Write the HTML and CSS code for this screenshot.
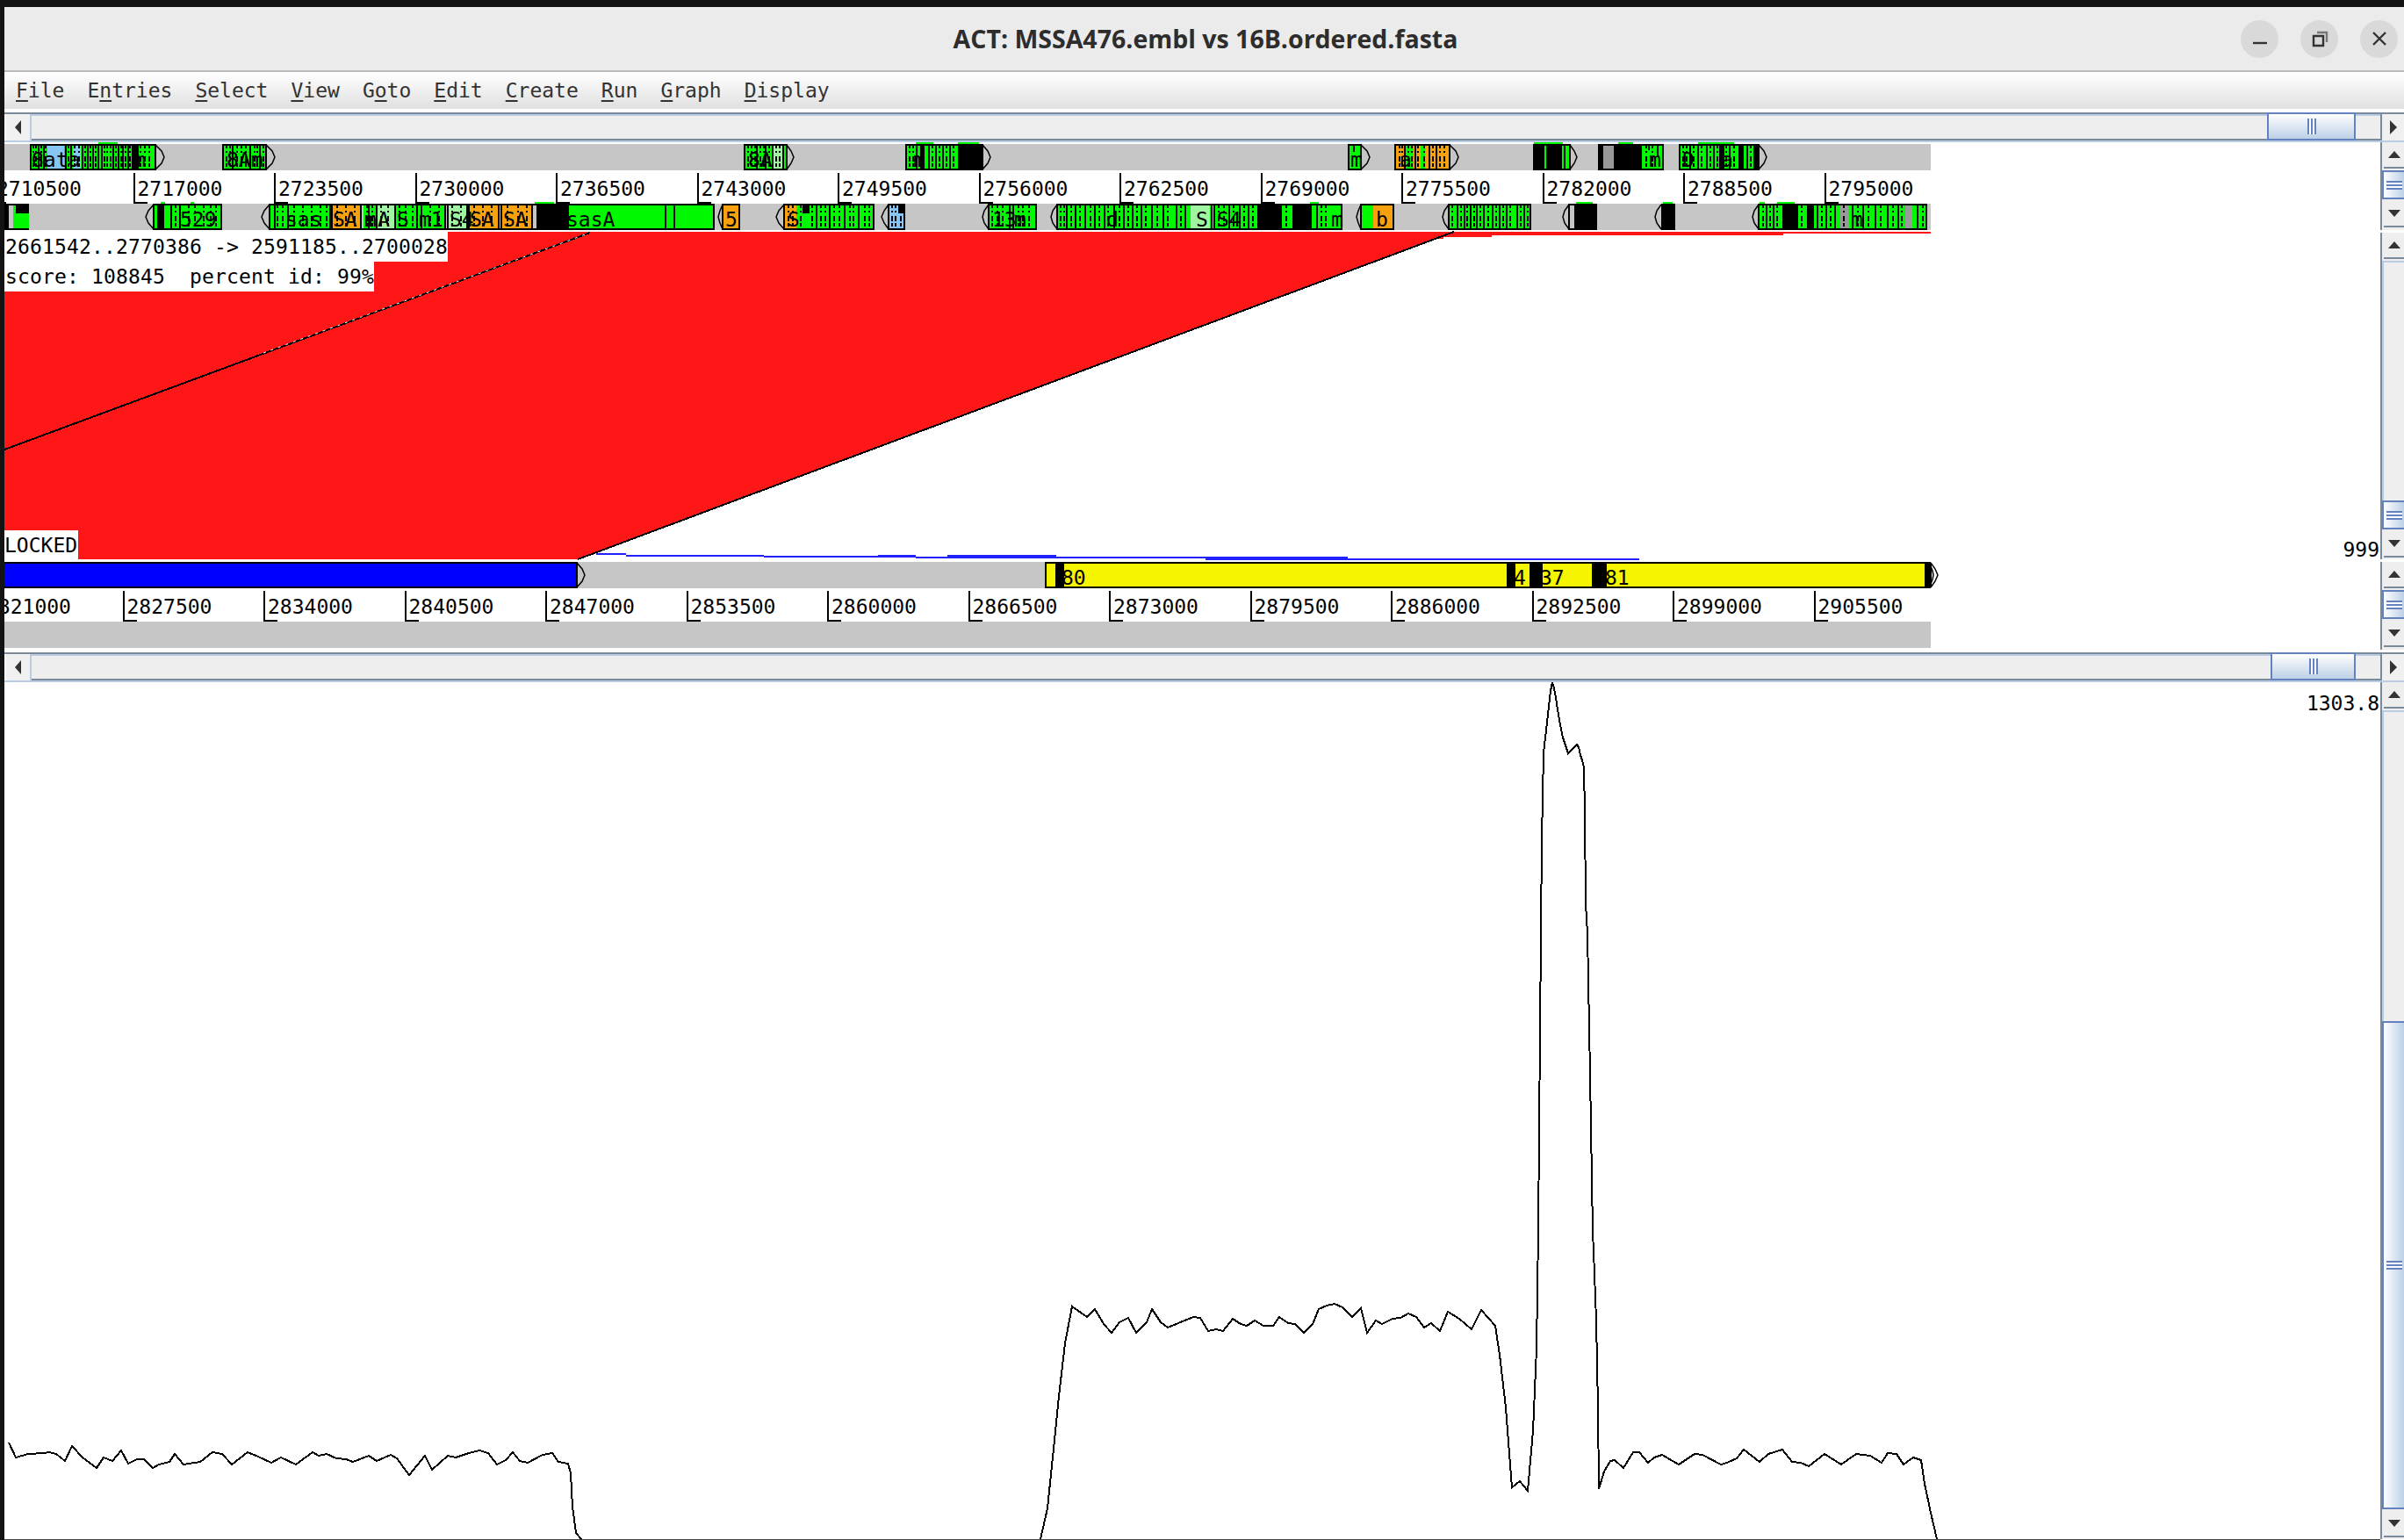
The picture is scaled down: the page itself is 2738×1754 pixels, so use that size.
FILE: index.html
```html
<!DOCTYPE html>
<html lang="en">
<head>
  <meta charset="UTF-8" />
  <title>ACT: MSSA476.embl vs 16B.ordered.fasta</title>
  <link rel="stylesheet" href="styles.css">
</head>
<body>
  <div class="window">
    <header class="titlebar">
      <span></span>
      <h1>ACT: MSSA476.embl vs 16B.ordered.fasta</h1>
      <div class="win-buttons">
        <button class="win-btn"><svg width="20" height="20" viewBox="0 0 20 20"><path class="win-icon" d="M2 15h16"/></svg></button>
        <button class="win-btn"><svg width="20" height="20" viewBox="0 0 20 20"><path class="win-icon" d="M3 7h11v11H3z"/><path class="win-icon faint" d="M7 3h11v11"/></svg></button>
        <button class="win-btn"><svg width="20" height="20" viewBox="0 0 20 20"><path class="win-icon" d="M3 3l14 14M17 3L3 17"/></svg></button>
      </div>
    </header>

    <nav class="menubar">
      <span><u>F</u>ile</span>
      <span>E<u>n</u>tries</span>
      <span><u>S</u>elect</span>
      <span><u>V</u>iew</span>
      <span>G<u>o</u>to</span>
      <span><u>E</u>dit</span>
      <span><u>C</u>reate</span>
      <span><u>R</u>un</span>
      <span><u>G</u>raph</span>
      <span><u>D</u>isplay</span>
    </nav>

    <div class="hscroll">
      <div class="arrow-btn left"><i class="tri-left"></i></div>
      <div class="hscroll-track"><div class="hthumb"><b></b></div></div>
      <div class="arrow-btn right"><i class="tri-right"></i></div>
    </div>

    <div class="viewer">
      <div class="viewer-main">
        <svg class="track" width="2194" height="32" viewBox="5 162 2194 32">
          <rect x="5" y="164" width="2194" height="30" class="gray"/>
          <path class="green" d="M112 162h22v2h-22zM1043 162h20v2h-20zM1091 162h24v2h-24zM1747 162h33v2h-33zM1843 162h17v2h-17zM1934 162h41v2h-41z"/>
          <path class="green" d="M35 165h142v28H35zM254 165h49v28h-49zM848 165h48v28h-48zM1032 165h87v28h-87zM1536 165h14v28h-14zM1747 165h41v28h-41zM1870 165h24v28h-24zM1913 165h90v28h-90z"/>
          <path class="blue" d="M54 166h19v26H54zM83 166h9v26h-9z"/>
          <path class="pale" d="M880 166h12v26h-12z"/>
          <path class="orange" d="M1589 165h62v28h-62z"/>
          <path class="green" d="M1601 166h9v26h-9zM1618 166h5v26h-5z"/>
          <path class="mid" d="M1826 166h12v26h-12z"/>
          <path class="black" d="M1091 165h28v28h-28zM1048 165h5v28h-5zM1747 165h12v28h-12zM1761 165h18v28h-18zM1821 165h5v28h-5zM1838 165h32v28h-32zM1958 165h6v28h-6zM1980 165h6v28h-6zM150 165h8v28h-8zM1997 165h6v28h-6z"/>
          <path class="ink" d="M35 164v30M177 164v30M254 164v30M303 164v30M848 164v30M896 164v30M1032 164v30M1119 164v30M1536 164v30M1550 164v30M1589 164v30M1651 164v30M1747 164v30M1788 164v30M1821 164v30M1894 164v30M1913 164v30M2003 164v30
            M44 165v28M50 165v28M75 165v28M81 165v28M94 165v28M100 165v28M106 165v28M112 165v28M116 165v28M129 165v28M135 165v28M140 165v28M146 165v28M265 165v28M285 165v28M296 165v28M862 165v28M872 165v28M880 165v28M892 165v28
            M1044 165v28M1058 165v28M1066 165v28M1074 165v28M1082 165v28M1542 165v8M1600 165v28M1612 165v28M1628 165v28M1636 165v28M1782 165v28M1888 165v12M1878 165v6M1925 165v28M1934 165v28M1944 165v28M1952 165v28M1970 165v28M1990 165v28"/>
          <path class="noise" d="M38 165v28M41 165v28M47 165v28M52 165v28M78 165v28M85 165v28M90 165v28M97 165v28M103 165v28M109 165v28M119 165v28M122 165v28M126 165v28M132 165v28M138 165v28M143 165v28M148 165v28M160 165v28M165 165v28M170 165v28
            M258 165v28M262 165v28M270 165v28M275 165v28M280 165v28M290 165v28M293 165v28M300 165v28M852 165v28M856 165v28M860 165v28M866 165v28M870 165v28M876 165v28M884 165v28M888 165v28
            M1036 165v28M1040 165v28M1050 165v28M1062 165v28M1070 165v28M1078 165v28M1086 165v28M1594 165v28M1597 165v28M1604 165v28M1608 165v28M1615 165v28M1622 165v28M1632 165v28M1640 165v28M1645 165v28
            M1917 165v28M1921 165v28M1929 165v28M1938 165v28M1948 165v28M1956 165v28M1966 165v28M1975 165v28M1985 165v28M1994 165v28M1875 165v28M1882 165v28"/>
          <path class="ink" d="M35 165h142M35 193h142M254 165h49M254 193h49M848 165h48M848 193h48M1032 165h87M1032 193h87M1536 165h14M1536 193h14M1589 165h62M1589 193h62M1747 165h41M1747 193h41M1821 165h73M1821 193h73M1913 165h90M1913 193h90"/>
          <path class="chev" d="M177 165l7 7 3 7-3 7-7 7M303 165l7 7 3 7-3 7-7 7M896 165l5 7 3 7-3 7-5 7M1119 165l6 7 3 7-3 7-6 7M1550 165l7 7 3 7-3 7-7 7M1651 165l7 7 3 7-3 7-7 7M1788 165l5 7 3 7-3 7-5 7M2003 165l6 7 3 7-3 7-6 7"/>
          <text x="36" y="190">8a</text><text x="64" y="190">ta</text><text x="152" y="190">m</text>
          <text x="258" y="190">8Am</text><text x="852" y="190">8A</text><text x="1040" y="190">m</text><text x="1538" y="190">m</text><text x="1878" y="190">m</text><text x="1594" y="190">a</text><text x="1916" y="190">D</text><text x="1960" y="190">a</text>
        </svg>

        <div class="ruler">
          <div class="tick first-top"><span>2710500</span></div>
          <div class="tick"><span>2717000</span></div>
          <div class="tick"><span>2723500</span></div>
          <div class="tick"><span>2730000</span></div>
          <div class="tick"><span>2736500</span></div>
          <div class="tick"><span>2743000</span></div>
          <div class="tick"><span>2749500</span></div>
          <div class="tick"><span>2756000</span></div>
          <div class="tick"><span>2762500</span></div>
          <div class="tick"><span>2769000</span></div>
          <div class="tick"><span>2775500</span></div>
          <div class="tick"><span>2782000</span></div>
          <div class="tick"><span>2788500</span></div>
          <div class="tick"><span>2795000</span></div>
        </div>

        <svg class="track" width="2194" height="30" viewBox="5 232 2194 30">
          <rect x="5" y="232" width="2194" height="30" class="gray"/>
          <path class="green" d="M183 230h5v2h-5zM217 230h4v2h-4zM609 230h22v2h-22zM1492 230h10v2h-10zM1795 230h19v2h-19zM1894 230h11v2h-11zM2004 230h6v2h-6zM2024 230h20v2h-20z"/>
          <path class="green" d="M15 233h18v28H15zM175 233h77v28h-77zM307 233h69v28h-69zM414 233h15v28h-15zM450 233h25v28h-25zM475 233h32v28h-32zM647 233h166v28H647zM893 233h102v28H893zM1126 233h54v28h-54zM1204 233h176v28h-176zM1383 233h145v28h-145zM1550 233h14v28h-14zM1650 233h93v28h-93zM2003 233h191v28H2003z"/>
          <path class="orange" d="M378 233h33v28h-33zM534 233h34v28h-34zM571 233h35v28h-35zM823 233h19v28h-19zM893 233h14v28h-14zM1564 233h23v28h-23z"/>
          <path class="pale" d="M429 233h21v28h-21zM510 233h22v28h-22zM1356 233h22v28h-22z"/>
          <path class="blue" d="M1012 233h18v28h-18z"/>
          <path class="mid" d="M2096 233h10v28h-10zM2170 233h8v28h-8z"/>
          <path class="black" d="M5 233h5v28H5zM18 233h15v10H18zM179 233h8v28h-8zM612 233h35v28h-35zM1432 233h28v28h-28zM1472 233h22v28h-22zM1793 233h26v28h-26zM1892 233h16v28h-16zM2030 233h18v28h-18zM2058 233h8v28h-8zM1023 233h7v10h-7zM914 233h8v10h-8z"/>
          <path class="ink" d="M175 232v30M252 232v30M307 232v30M376 232v30M378 232v30M411 232v30M429 232v30M450 232v30M475 232v30M507 232v30M510 232v30M532 232v30M534 232v30M568 232v30M571 232v30M606 232v30M647 232v30M813 232v30M823 232v30M842 232v30M893 232v30M995 232v30M1012 232v30M1030 232v30M1126 232v30M1180 232v30M1204 232v30M1380 232v30M1383 232v30M1528 232v30M1550 232v30M1587 232v30M1650 232v30M1743 232v30M1787 232v30M2003 232v30M2194 232v30
            M195 233v28M205 233v28M313 233v28M328 233v28M420 233v28M480 233v28M612 233v28M620 233v28M758 233v28M768 233v28M930 233v28M945 233v28M962 233v28M978 233v28M1150 233v28M1154 233v28M1215 233v28M1225 233v28M1236 233v28M1247 233v28M1258 233v28M1269 233v28M1280 233v28M1290 233v28M1300 233v28M1312 233v28M1325 233v28M1340 233v28M1350 233v28M1400 233v28M1412 233v28M1422 233v28M1500 233v28M1660 233v28M1668 233v28M1675 233v28M1682 233v28M1690 233v28M1700 233v28M1708 233v28M1716 233v28M1728 233v28M1736 233v28M2012 233v28M2020 233v28M2070 233v28M2080 233v28M2090 233v28M2110 233v28M2122 233v28M2136 233v28M2150 233v28M2162 233v28M2184 233v28"/>
          <path class="noise" d="M200 233v28M215 233v28M222 233v28M232 233v28M240 233v28M246 233v28M316 233v28M322 233v28M335 233v28M345 233v28M355 233v28M365 233v28M372 233v28M384 233v28M394 233v28M404 233v28M418 233v28M424 233v28M434 233v28M442 233v28M455 233v28M462 233v28M470 233v28M480 233v28M490 233v28M500 233v28M515 233v28M525 233v28M540 233v28M550 233v28M560 233v28M578 233v28M590 233v28M600 233v28
            M898 233v28M903 233v28M912 233v28M925 233v28M935 233v28M940 233v28M950 233v28M956 233v28M968 233v28M972 233v28M985 233v28M990 233v28M1016 233v28M1020 233v28M1026 233v28M1130 233v28M1136 233v28M1142 233v28M1160 233v28M1165 233v28M1172 233v28
            M1208 233v28M1212 233v28M1220 233v28M1230 233v28M1242 233v28M1252 233v28M1262 233v28M1275 233v28M1285 233v28M1295 233v28M1305 233v28M1318 233v28M1330 233v28M1345 233v28M1388 233v28M1394 233v28M1405 233v28M1417 233v28M1427 233v28M1465 233v28M1505 233v28M1510 233v28
            M1654 233v28M1664 233v28M1671 233v28M1679 233v28M1686 233v28M1695 233v28M1704 233v28M1712 233v28M1720 233v28M1732 233v28M1740 233v28M2008 233v28M2016 233v28M2024 233v28M2052 233v28M2075 233v28M2085 233v28M2100 233v28M2116 233v28M2128 233v28M2142 233v28M2156 233v28M2166 233v28M2190 233v28"/>
          <path class="ink" d="M5 233h28M5 261h28M175 233h77M175 261h77M307 233h506M307 261h506M823 233h19M823 261h19M893 233h102M893 261h102M1012 233h18M1012 261h18M1126 233h54M1126 261h54M1204 233h324M1204 261h324M1550 233h37M1550 261h37M1650 233h93M1650 261h93M1787 233h32M1787 261h32M1892 233h16M1892 261h16M2003 233h191M2003 261h191"/>
          <path class="chev" d="M175 233l-6 7-3 7 3 7 6 7M307 233l-6 7-3 7 3 7 6 7M823 233l-3 7-2 7 2 7 3 7M893 233l-6 7-3 7 3 7 6 7M1012 233l-5 7-3 7 3 7 5 7M1126 233l-5 7-2 7 2 7 5 7M1204 233l-5 7-2 7 2 7 5 7M1550 233l-3 7-2 7 2 7 3 7M1650 233l-5 7-2 7 2 7 5 7M1787 233l-5 7-2 7 2 7 5 7M1892 233l-5 7-2 7 2 7 5 7M2003 233l-5 7-2 7 2 7 5 7"/>
          <text x="205" y="258">529</text><text x="325" y="258">sas</text><text x="379" y="258">SA</text><text x="415" y="258">m</text><text x="430" y="258">A</text><text x="452" y="258">S</text><text x="477" y="258">m1</text><text x="512" y="258">S4</text><text x="535" y="258">SA</text><text x="573" y="258">SA</text><text x="645" y="258">sasA</text><text x="826" y="258">5</text><text x="897" y="258">S</text><text x="1130" y="258">13</text><text x="1155" y="258">m</text><text x="1260" y="258">d</text><text x="1362" y="258">S</text><text x="1386" y="258">S4</text><text x="1516" y="258">m</text><text x="1567" y="258">b</text><text x="2108" y="258">m</text>
        </svg>

        <div class="compare">
          <svg class="compare-art" width="2706" height="378" viewBox="5 262 2706 378">
            <polygon class="red" points="5,264 1656,264 658,637 5,637"/>
            <path class="red" d="M1650 264h549v2h-168v2h-332v2h-55v2h-10z"/>
            <path class="edge" d="M1656 264L658 637"/>
            <path class="edge" d="M5 512L672 265"/>
            <path class="edge-speck" d="M300 402L672 265"/>
            <path class="blue-hit" d="M679 631h34M713 633h157M870 634h173M1000 633h43M1079 633h124M1043 635h330M1373 635h162M1373 637h494"/>
          </svg>
          <div class="hit-label">
            <div class="hit-line">2661542..2770386 -&gt; 2591185..2700028</div>
            <div class="hit-line">score: 108845  percent id: 99%</div>
          </div>
          <div class="locked">LOCKED</div>
          <div class="scale-label">999</div>
        </div>

        <svg class="track" width="2194" height="30" viewBox="5 640 2194 30">
          <rect x="5" y="640" width="2194" height="30" class="gray"/>
          <path class="blue-full" d="M5 641h652v28H5z"/>
          <path class="yellow" d="M1191 641h1008v28H1191z"/>
          <path class="black" d="M1202 641h10v28h-10zM1716 641h10v28h-10zM1742 641h15v28h-15zM1813 641h17v28h-17zM2192 641h8v28h-8z"/>
          <path class="ink" d="M5 641h652M5 669h652M657 640v30M1191 641h1008M1191 669h1008M1191 640v30"/>
          <path class="chev" d="M657 641l6 7 3 7-3 7-6 7M2199 641l5 7 3 7-3 7-5 7M2199 645l2 5 1 5-1 5-2 5"/>
          <text x="1209" y="666">80</text><text x="1724" y="666">4</text><text x="1754" y="666">37</text><text x="1828" y="666">81</text>
        </svg>

        <div class="ruler">
          <div class="tick first-bottom"><span>2821000</span></div>
          <div class="tick"><span>2827500</span></div>
          <div class="tick"><span>2834000</span></div>
          <div class="tick"><span>2840500</span></div>
          <div class="tick"><span>2847000</span></div>
          <div class="tick"><span>2853500</span></div>
          <div class="tick"><span>2860000</span></div>
          <div class="tick"><span>2866500</span></div>
          <div class="tick"><span>2873000</span></div>
          <div class="tick"><span>2879500</span></div>
          <div class="tick"><span>2886000</span></div>
          <div class="tick"><span>2892500</span></div>
          <div class="tick"><span>2899000</span></div>
          <div class="tick"><span>2905500</span></div>
        </div>

        <div class="track-empty"></div>
      </div>

      <div class="vcolumn">
        <div class="vscroll small">
          <div class="v-btn"><i class="tri-up"></i></div>
          <div class="vthumb"><b></b></div>
          <div class="v-btn"><i class="tri-down"></i></div>
        </div>
        <div class="vscroll grow">
          <div class="v-btn"><i class="tri-up"></i></div>
          <div class="v-track"></div>
          <div class="vthumb"><b></b></div>
          <div class="v-btn"><i class="tri-down"></i></div>
        </div>
        <div class="vscroll small">
          <div class="v-btn"><i class="tri-up"></i></div>
          <div class="vthumb"><b></b></div>
          <div class="v-btn"><i class="tri-down"></i></div>
        </div>
      </div>
    </div>

    <div class="hscroll second">
      <div class="arrow-btn left"><i class="tri-left"></i></div>
      <div class="hscroll-track"><div class="hthumb wide"><b></b></div></div>
      <div class="arrow-btn right"><i class="tri-right"></i></div>
    </div>

    <div class="graph-row">
      <div class="graph">
        <svg class="graph-art" width="2706" height="976" viewBox="5 774 2706 976">
          <polyline class="plot" points="10,1640 18,1657 32,1653 50,1652 56,1651 64,1653 74,1661 82,1644 94,1657 110,1669 118,1657 128,1661 138,1649 146,1664 156,1659 164,1659 174,1669 181,1665 193,1662 199,1653 209,1665 228,1662 242,1651 253,1653 264,1665 282,1651 294,1656 309,1663 320,1657 337,1665 356,1651 363,1655 372,1653 383,1658 394,1659 402,1662 420,1655 429,1661 445,1654 452,1658 466,1677 484,1655 492,1671 510,1655 519,1657 534,1652 546,1649 556,1652 566,1665 576,1660 584,1651 592,1661 601,1663 618,1654 629,1652 636,1662 647,1664 650,1675 652,1713 656,1743 662,1750"/>
          <polyline class="plot" points="1185,1750 1193,1715 1200,1647 1206,1587 1213,1527 1221,1485 1238,1497 1247,1488 1257,1505 1266,1515 1275,1503 1285,1498 1294,1515 1306,1503 1312,1488 1322,1503 1330,1509 1359,1497 1367,1498 1376,1513 1385,1511 1393,1513 1404,1499 1413,1505 1420,1507 1429,1501 1439,1507 1450,1507 1457,1497 1467,1504 1475,1505 1485,1515 1495,1505 1502,1488 1511,1484 1520,1482 1529,1486 1540,1497 1550,1487 1557,1515 1567,1501 1574,1505 1586,1499 1595,1498 1604,1493 1613,1497 1622,1509 1630,1504 1640,1513 1649,1491 1662,1499 1676,1511 1687,1489 1703,1507 1708,1540 1715,1600 1722,1691 1731,1684 1740,1695 1746,1627 1750,1533 1752,1400 1755,1060 1756,953 1758,855 1760,837 1762,820 1764,802 1766,784 1768,774 1770,781 1772,792 1774,805 1776,817 1778,828 1780,837 1782,843 1786,855 1796,845 1798,848 1800,857 1802,863 1804,871 1805,923 1806,1027 1808,1060 1811,1220 1814,1400 1815,1422 1818,1500 1820,1600 1821,1693 1827,1673 1834,1661 1839,1660 1849,1669 1860,1651 1867,1651 1877,1663 1884,1657 1893,1654 1912,1665 1930,1653 1939,1654 1960,1665 1967,1663 1978,1658 1986,1648 2004,1662 2014,1653 2030,1648 2041,1662 2051,1663 2060,1667 2078,1653 2097,1665 2114,1653 2130,1655 2143,1663 2150,1652 2160,1653 2168,1665 2179,1657 2188,1660 2192,1687 2199,1720 2206,1750"/>
        </svg>
        <div class="graph-max">1303.8</div>
      </div>
      <div class="vscroll graph-scroll">
        <div class="v-btn"><i class="tri-up"></i></div>
        <div class="v-track"></div>
        <div class="vthumb tall"><b></b></div>
        <div class="v-btn"><i class="tri-down"></i></div>
      </div>
    </div>
    <div class="bottom-line"></div>
  </div>
</body>
</html>
```

FILE: styles.css
```css
body {
  margin: 0;
  background-color: #131313;
  font-family: "DejaVu Sans Mono", monospace;
  color: #000;
}
.window {
  width: 2733px;
  height: 1746px;
  margin: 8px 0 0 5px;
  background-color: #fff;
  display: flex;
  flex-direction: column;
  overflow: hidden;
}

/* title bar */
.titlebar {
  flex: 0 0 72px;
  background-color: #ebebeb;
  border-bottom: 2px solid #bbb;
  display: grid;
  grid-template-columns: 1fr auto 1fr;
  align-items: center;
}
.titlebar h1 {
  margin: 0 0 0 3px;
  font-family: "Open Sans", sans-serif;
  font-size: 28.5px;
  font-weight: 700;
  color: #2d2d2d;
}
.win-buttons {
  display: flex;
  justify-content: flex-end;
  gap: 25px;
  padding-right: 7px;
}
.win-btn {
  width: 43px;
  height: 43px;
  padding: 0;
  border: none;
  border-radius: 50%;
  background-color: #d9d9d9;
  display: flex;
  align-items: center;
  justify-content: center;
}
.win-icon {
  fill: none;
  stroke: #333;
  stroke-width: 2.4;
}
.win-icon.faint {
  stroke: #777;
}

/* menu */
.menubar {
  flex: 0 0 42px;
  display: flex;
  align-items: center;
  gap: 26px;
  padding-left: 13px;
  font-size: 23px;
  color: #333;
  background: linear-gradient(#fff, #e0e0e0);
  margin-bottom: 4px;
}
.menubar u {
  text-underline-offset: 3px;
}

/* horizontal scrollbars */
.hscroll {
  flex: 0 0 34px;
  display: flex;
  box-sizing: border-box;
  background-color: #eee;
  border-top: 2px solid #7a8a9a;
  border-bottom: 2px solid #b8cce4;
  box-shadow: inset 0 2px 0 #b8cce4, inset 0 -2px 0 #7a8a9a;
}
.arrow-btn {
  display: flex;
  align-items: center;
  justify-content: center;
  background-color: #f0f0f0;
}
.arrow-btn.left {
  flex: 0 0 31px;
  border-left: 2px solid #fff;
  border-right: 2px solid #b8cce4;
  box-sizing: border-box;
}
.arrow-btn.right {
  flex: 0 0 27px;
  border-left: 2px solid #7a8a9a;
  box-sizing: border-box;
}
.hscroll-track {
  flex: 1;
  display: flex;
  justify-content: flex-end;
  padding-right: 28px;
}
.hthumb {
  width: 101px;
  box-sizing: border-box;
  border: 2px solid #6382bf;
  margin-top: -2px;
  background: linear-gradient(#fff, #bcd0e6);
  display: flex;
  align-items: center;
  justify-content: center;
}
.hthumb.wide {
  width: 97px;
}
.hthumb b {
  width: 10px;
  height: 18px;
  background: repeating-linear-gradient(90deg, #6382bf 0 2px, #fff 2px 4px);
}
.tri-left {
  border-style: solid;
  border-width: 8px 7px 8px 0;
  border-color: transparent #333 transparent transparent;
}
.tri-right {
  border-style: solid;
  border-width: 8px 0 8px 8px;
  border-color: transparent transparent transparent #333;
}
.tri-up {
  border-style: solid;
  border-width: 0 7px 8px 7px;
  border-color: transparent transparent #333 transparent;
}
.tri-down {
  border-style: solid;
  border-width: 8px 7px 0 7px;
  border-color: #333 transparent transparent transparent;
}

/* genome viewer */
.viewer {
  flex: 0 0 578px;
  display: flex;
}
.viewer-main {
  width: 2706px;
  box-sizing: border-box;
  background-color: #fff;
}
.track {
  display: block;
  overflow: visible;
  shape-rendering: crispEdges;
}
.track text {
  font-family: "DejaVu Sans Mono", monospace;
  font-size: 23px;
  fill: #000;
}
.gray { fill: #c6c6c6; }
.green { fill: #00f800; }
.blue { fill: #87c5f5; }
.pale { fill: #a0f5a0; }
.orange { fill: #f8a10f; }
.mid { fill: #999; }
.yellow { fill: #f5f500; }
.blue-full { fill: #0000ff; }
.black { fill: #000; }
.ink {
  fill: none;
  stroke: #000;
  stroke-width: 2;
}
.noise {
  fill: none;
  stroke: #000;
  stroke-width: 2;
  stroke-dasharray: 4 3 2 4 6 2;
}
.chev {
  fill: none;
  stroke: #000;
  stroke-width: 1.5;
  shape-rendering: auto;
}
.ruler {
  height: 38px;
  width: 2194px;
  display: flex;
  overflow: hidden;
  font-size: 23px;
  padding-top: 3px;
  box-sizing: border-box;
}
.tick {
  flex: 0 0 160.5px;
  box-sizing: border-box;
  border-left: 2px solid #000;
  display: flex;
  flex-direction: column;
  justify-content: space-between;
  padding-left: 3px;
  line-height: 30px;
}
.tick::after {
  content: "";
  display: block;
  width: 14px;
  height: 2px;
  margin-left: -3px;
  background-color: #000;
}
.tick span {
  display: block;
  margin-top: 3px;
  white-space: nowrap;
  font-size: 23px;
}
.first-top {
  margin-left: -14px;
}
.first-bottom {
  margin-left: -26px;
}
.track-empty {
  width: 2194px;
  height: 30px;
  background-color: #c6c6c6;
}

/* comparison between the two sequences */
.compare {
  position: relative;
  height: 378px;
}
.compare-art {
  display: block;
}
.red { fill: #ff1616; shape-rendering: crispEdges; }
.edge {
  fill: none;
  stroke: #000;
  stroke-width: 2;
  shape-rendering: crispEdges;
}
.edge-speck {
  fill: none;
  stroke: #fff;
  stroke-width: 1;
  stroke-dasharray: 3 6;
}
.blue-hit {
  fill: none;
  stroke: #2222ff;
  stroke-width: 2;
  shape-rendering: crispEdges;
}
.hit-label {
  position: absolute;
  left: 0;
  top: 2px;
  font-size: 23px;
  line-height: 34px;
  letter-spacing: 0.15px;
  display: flex;
  flex-direction: column;
  align-items: flex-start;
}
.hit-line {
  background-color: #fff;
  white-space: pre;
  padding-left: 1px;
}
.locked {
  position: absolute;
  left: 0;
  top: 342px;
  width: 84px;
  height: 34px;
  line-height: 34px;
  background-color: #fff;
  font-size: 23px;
}
.scale-label {
  position: absolute;
  right: 1px;
  top: 349px;
  font-size: 23px;
  line-height: 30px;
}

/* vertical scrollbars */
.vcolumn {
  flex: 1;
  display: flex;
  flex-direction: column;
}
.vscroll {
  display: flex;
  flex-direction: column;
  background-color: #eee;
  border-left: 2px solid #7a8a9a;
  box-sizing: border-box;
}
.vcolumn .vscroll {
  margin-bottom: 3px;
}
.vscroll.small {
  height: 100px;
}
.vscroll.grow {
  height: 372px;
}
.v-btn {
  flex: 0 0 30px;
  box-sizing: border-box;
  margin-left: 2px;
  margin-bottom: 2px;
  background-color: #eee;
  border-bottom: 2px solid #7a8a9a;
  display: flex;
  align-items: center;
  justify-content: center;
}
.v-track {
  flex: 1;
  border-left: 2px solid #b8cce4;
  border-top: 2px solid #b8cce4;
}
.vthumb {
  flex: 0 0 33px;
  box-sizing: border-box;
  border-left: 2px solid #6382bf;
  border-top: 2px solid #6382bf;
  border-bottom: 2px solid #6382bf;
  margin-bottom: 2px;
  background: linear-gradient(90deg, #fff, #bcd0e6);
  display: flex;
  align-items: center;
  justify-content: center;
}
.vthumb b {
  width: 18px;
  height: 10px;
  background: repeating-linear-gradient(#6382bf 0 2px, #fff 2px 4px);
}
.vthumb.tall {
  flex: 0 0 556px;
}

/* graph */
.graph-row {
  flex: 0 0 976px;
  display: flex;
}
.graph {
  position: relative;
  width: 2706px;
}
.graph-art {
  display: block;
}
.plot {
  fill: none;
  stroke: #000;
  stroke-width: 2;
  shape-rendering: crispEdges;
}
.graph-max {
  position: absolute;
  right: 1px;
  top: 9px;
  font-size: 23px;
  line-height: 30px;
}
.graph-scroll {
  flex: 1;
}
.bottom-line {
  height: 2px;
  width: 2706px;
  background-color: #444;
}
```
